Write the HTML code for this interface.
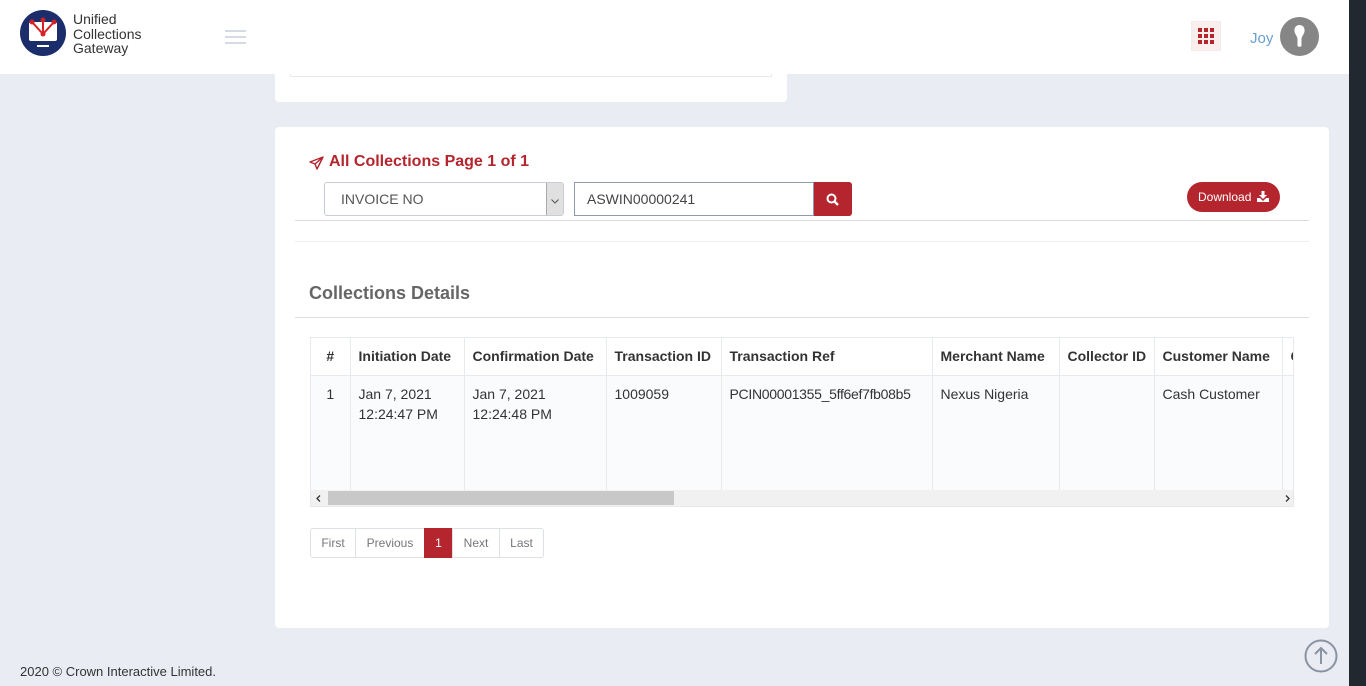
<!DOCTYPE html>
<html><head><meta charset="utf-8"><style>
*{box-sizing:border-box;margin:0;padding:0}
body{width:1366px;height:686px;overflow:hidden;background:#e9ecf3;font-family:"Liberation Sans",sans-serif;position:relative;color:#333}
.sb{position:absolute;right:0;top:0;width:17px;height:686px;background:#212830}
.hdr{position:absolute;left:0;top:0;width:1349px;height:74px;background:#fff}
.abs{position:absolute}
.card{position:absolute;background:#fff;border-radius:4px}
table{border-collapse:collapse;font-size:14px;color:#333;table-layout:fixed;width:1100px}
td,th{border-right:1px solid #e6e9ee;vertical-align:top;text-align:left;padding:0 8px;white-space:nowrap;overflow:hidden}
th{height:37px;vertical-align:middle;font-weight:bold;color:#333;border-bottom:1px solid #e6e9ee}
td{height:116px;background:#fafbfd;padding-top:8px;line-height:20px}
.pg{position:absolute;top:528px;height:30px;border:1px solid #dde0e5;font-size:12px;color:#777;line-height:28px;text-align:center}
</style></head><body>
<div class="hdr">
 <svg class="abs" style="left:20px;top:10px" width="46" height="46" viewBox="0 0 46 46"><circle cx="23" cy="23" r="23" fill="#1b2d6b"/><rect x="9" y="12" width="28" height="19" rx="2" fill="#fff"/><rect x="17" y="35" width="12" height="2" fill="#fff"/><path d="M12 12 L23 24 L34 12 M23 10 V24" stroke="#d42027" stroke-width="2" fill="none"/><circle cx="12" cy="12" r="2.5" fill="#d42027"/><circle cx="23" cy="10" r="2.5" fill="#d42027"/><circle cx="34" cy="12" r="2.5" fill="#d42027"/><circle cx="23" cy="24" r="2.5" fill="#d42027"/></svg>
 <div class="abs" style="left:73px;top:12px;font-size:14px;line-height:14.5px;color:#333">Unified<br>Collections<br>Gateway</div>
 <div class="abs" style="left:225px;top:30px;width:21px;height:2px;background:#d5dae3;box-shadow:0 6px 0 #d5dae3,0 12px 0 #d5dae3"></div>
 <div class="abs" style="left:1191px;top:21px;width:30px;height:30px;background:#fdeeee;border:1px solid #eee"></div>
 <svg class="abs" style="left:1198px;top:28px" width="16" height="16"><g fill="#b5252d"><rect x="0" y="0" width="4" height="4"/><rect x="6" y="0" width="4" height="4"/><rect x="12" y="0" width="4" height="4"/><rect x="0" y="6" width="4" height="4"/><rect x="6" y="6" width="4" height="4"/><rect x="12" y="6" width="4" height="4"/><rect x="0" y="12" width="4" height="4"/><rect x="6" y="12" width="4" height="4"/><rect x="12" y="12" width="4" height="4"/></g></svg>
 <div class="abs" style="left:1250px;top:30px;font-size:15px;color:#6a9fd4">Joy</div>
 <svg class="abs" style="left:1280px;top:17px" width="39" height="39"><circle cx="19.5" cy="19.5" r="19.5" fill="#868686"/><path d="M19.5 8c-4 0-5.5 3.5-5 6.5.5 3 3 5 3 7.5v7c1 1 3 1 4 0v-7c0-2.5 2.5-4.5 3-7.5.5-3-1-6.5-5-6.5z" fill="#fff"/></svg>
</div>
<div class="sb"></div>
<div class="card" style="left:275px;top:74px;width:512px;height:28px;border-radius:0 0 4px 4px"><div class="abs" style="left:15px;top:0;width:482px;height:3px;border:1px solid #e6e9ee;border-top:none"></div></div>
<div class="card" style="left:275px;top:127px;width:1054px;height:501px">
 <svg class="abs" style="left:34px;top:29px" width="15" height="14" viewBox="0 0 15 14"><path d="M14 1 L1 6 L6 8 L8 13 Z M6 8 L14 1" stroke="#b5252d" stroke-width="1.4" fill="none" stroke-linejoin="round"/></svg>
 <div class="abs" style="left:54px;top:26px;font-size:16px;font-weight:bold;color:#b5252d">All Collections Page 1 of 1</div>
 <div class="abs" style="left:49px;top:55px;width:240px;height:34px;border:1px solid #c7ccd6;border-radius:3px;font-size:14px;color:#555;line-height:32px;padding-left:16px">INVOICE NO<div class="abs" style="right:0;top:0;width:17px;height:32px;background:#e0e0e0;border-left:1px solid #aaa"><svg style="margin:13px 0 0 4px" width="8" height="5"><path d="M0.5 0.5 L4 4 L7.5 0.5" stroke="#555" fill="none"/></svg></div></div>
 <div class="abs" style="left:299px;top:55px;width:240px;height:34px;border:1px solid #8e9ab4;font-size:14px;color:#444;line-height:32px;padding-left:12px">ASWIN00000241</div>
 <div class="abs" style="left:539px;top:55px;width:38px;height:34px;background:#b5252d;border-radius:0 3px 3px 0"><svg style="margin:11px 0 0 12px" width="13" height="13"><circle cx="5.5" cy="5.5" r="4" stroke="#fff" stroke-width="2" fill="none"/><path d="M8.5 8.5 L12 12" stroke="#fff" stroke-width="2.4"/></svg></div>
 <div class="abs" style="left:912px;top:55px;width:93px;height:30px;background:#b5252d;border-radius:15px;color:#fff;font-size:12px;line-height:30px;padding-left:11px">Download<svg style="position:absolute;left:70px;top:9px" width="12" height="11" viewBox="0 0 12 11"><path d="M4.5 0h3v4h2.5L6 8 2 4h2.5z M0 7h3l3 3 3-3h3v4H0z" fill="#fff"/></svg></div>
 <div class="abs" style="left:20px;top:93px;width:1014px;height:1px;background:#ddd"></div>
 <div class="abs" style="left:20px;top:114px;width:1014px;height:1px;background:#eee"></div>
 <div class="abs" style="left:34px;top:156px;font-size:18px;font-weight:bold;color:#666">Collections Details</div>
 <div class="abs" style="left:20px;top:190px;width:1014px;height:1px;background:#ddd"></div>
 <div class="abs" style="left:35px;top:210px;width:984px;height:170px;overflow:hidden;border:1px solid #e6e9ee">
  <table><colgroup><col style="width:39px"><col style="width:114px"><col style="width:142px"><col style="width:115px"><col style="width:211px"><col style="width:127px"><col style="width:95px"><col style="width:128px"><col></colgroup>
  <tr><th style="text-align:center">#</th><th>Initiation Date</th><th>Confirmation Date</th><th>Transaction ID</th><th>Transaction Ref</th><th>Merchant Name</th><th>Collector ID</th><th>Customer Name</th><th>Customer</th></tr>
  <tr><td style="text-align:center">1</td><td>Jan 7, 2021<br>12:24:47 PM</td><td>Jan 7, 2021<br>12:24:48 PM</td><td>1009059</td><td style="letter-spacing:-0.3px">PCIN00001355_5ff6ef7fb08b5</td><td>Nexus Nigeria</td><td></td><td>Cash Customer</td><td></td></tr></table>
  <div class="abs" style="left:0;top:152px;width:984px;height:17px;background:#f1f1f1"><div class="abs" style="left:17px;top:1px;width:346px;height:14px;background:#c8c8c8"></div><svg class="abs" style="left:5px;top:5px" width="5" height="7"><path d="M4 0.5 L1 3.5 L4 6.5" stroke="#333" stroke-width="1.3" fill="none"/></svg><svg class="abs" style="right:5px;top:5px" width="5" height="7"><path d="M1 0.5 L4 3.5 L1 6.5" stroke="#333" stroke-width="1.3" fill="none"/></svg></div>
 </div>
</div>
<div class="pg" style="left:310px;width:46px;border-radius:3px 0 0 3px">First</div>
<div class="pg" style="left:355px;width:70px">Previous</div>
<div class="pg" style="left:424px;width:29px;background:#b5252d;border-color:#b5252d;color:#fff">1</div>
<div class="pg" style="left:452px;width:48px">Next</div>
<div class="pg" style="left:499px;width:45px;border-radius:0 3px 3px 0">Last</div>
<div class="abs" style="left:20px;top:664px;font-size:13px;color:#333">2020 © Crown Interactive Limited.</div>
<svg class="abs" style="left:1304px;top:639px" width="34" height="34"><circle cx="17" cy="17" r="15.5" stroke="#8a93a3" stroke-width="2" fill="none"/><path d="M17 25 V10 M11 15 L17 9 L23 15" stroke="#8a93a3" stroke-width="2" fill="none"/></svg>
</body></html>
